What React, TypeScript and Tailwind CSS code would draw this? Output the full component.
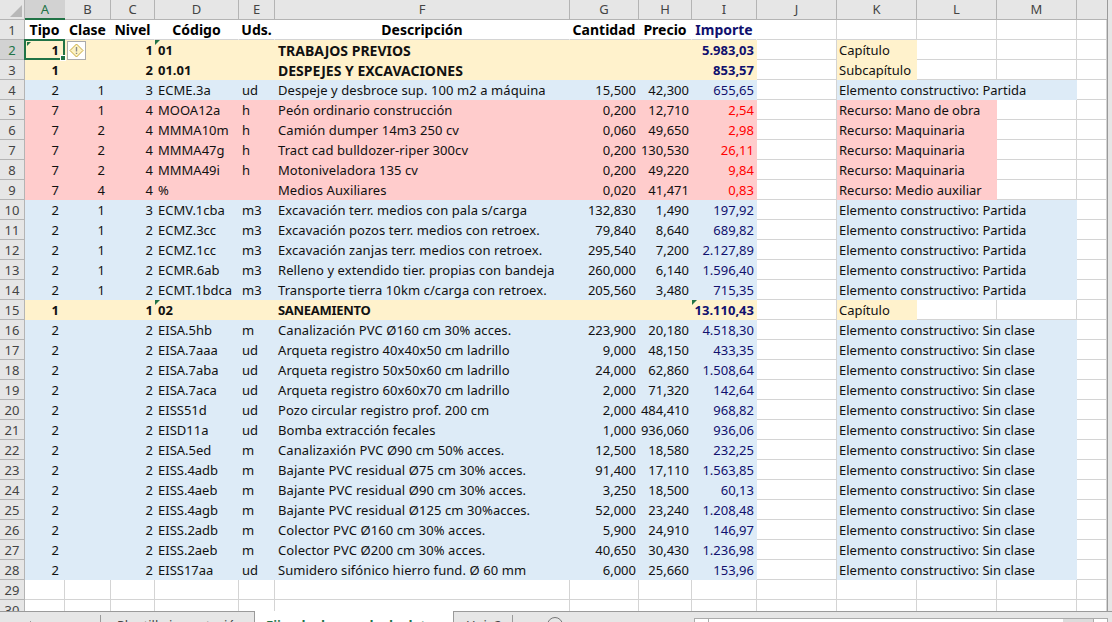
import React from 'react';

type RowKind = 'chapter' | 'item' | 'resource' | 'empty';

interface Row {
  kind: RowKind;
  tipo?: string;
  clase?: string;
  nivel?: string;
  codigo?: string;
  uds?: string;
  desc?: string;
  cant?: string;
  precio?: string;
  importe?: string;
  label?: string;
  flagCode?: boolean;
  flagImporte?: boolean;
  descClass?: string;
}

const SC = 'Elemento constructivo: Sin clase';
const EP = 'Elemento constructivo: Partida';

const rows: Row[] = [
  { kind: 'chapter', tipo: '1', nivel: '1', codigo: '01', desc: 'TRABAJOS PREVIOS', importe: '5.983,03', label: 'Capítulo', flagCode: true, descClass: 'text-[14px]' },
  { kind: 'chapter', tipo: '1', nivel: '2', codigo: '01.01', desc: 'DESPEJES Y EXCAVACIONES', importe: '853,57', label: 'Subcapítulo', descClass: 'text-[14px]' },
  { kind: 'item', tipo: '2', clase: '1', nivel: '3', codigo: 'ECME.3a', uds: 'ud', desc: 'Despeje y desbroce sup. 100 m2 a máquina', cant: '15,500', precio: '42,300', importe: '655,65', label: EP },
  { kind: 'resource', tipo: '7', clase: '1', nivel: '4', codigo: 'MOOA12a', uds: 'h', desc: 'Peón ordinario construcción', cant: '0,200', precio: '12,710', importe: '2,54', label: 'Recurso: Mano de obra' },
  { kind: 'resource', tipo: '7', clase: '2', nivel: '4', codigo: 'MMMA10m', uds: 'h', desc: 'Camión dumper 14m3 250 cv', cant: '0,060', precio: '49,650', importe: '2,98', label: 'Recurso: Maquinaria' },
  { kind: 'resource', tipo: '7', clase: '2', nivel: '4', codigo: 'MMMA47g', uds: 'h', desc: 'Tract cad bulldozer-riper 300cv', cant: '0,200', precio: '130,530', importe: '26,11', label: 'Recurso: Maquinaria' },
  { kind: 'resource', tipo: '7', clase: '2', nivel: '4', codigo: 'MMMA49i', uds: 'h', desc: 'Motoniveladora 135 cv', cant: '0,200', precio: '49,220', importe: '9,84', label: 'Recurso: Maquinaria' },
  { kind: 'resource', tipo: '7', clase: '4', nivel: '4', codigo: '%', desc: 'Medios Auxiliares', cant: '0,020', precio: '41,471', importe: '0,83', label: 'Recurso: Medio auxiliar' },
  { kind: 'item', tipo: '2', clase: '1', nivel: '3', codigo: 'ECMV.1cba', uds: 'm3', desc: 'Excavación terr. medios con pala s/carga', cant: '132,830', precio: '1,490', importe: '197,92', label: EP },
  { kind: 'item', tipo: '2', clase: '1', nivel: '2', codigo: 'ECMZ.3cc', uds: 'm3', desc: 'Excavación pozos terr. medios con retroex.', cant: '79,840', precio: '8,640', importe: '689,82', label: EP },
  { kind: 'item', tipo: '2', clase: '1', nivel: '2', codigo: 'ECMZ.1cc', uds: 'm3', desc: 'Excavación zanjas terr. medios con retroex.', cant: '295,540', precio: '7,200', importe: '2.127,89', label: EP },
  { kind: 'item', tipo: '2', clase: '1', nivel: '2', codigo: 'ECMR.6ab', uds: 'm3', desc: 'Relleno y extendido tier. propias con bandeja', cant: '260,000', precio: '6,140', importe: '1.596,40', label: EP },
  { kind: 'item', tipo: '2', clase: '1', nivel: '2', codigo: 'ECMT.1bdca', uds: 'm3', desc: 'Transporte tierra 10km c/carga con retroex.', cant: '205,560', precio: '3,480', importe: '715,35', label: EP },
  { kind: 'chapter', tipo: '1', nivel: '1', codigo: '02', desc: 'SANEAMIENTO', importe: '13.110,43', label: 'Capítulo', flagCode: true, flagImporte: true, descClass: 'tracking-[-0.3px]' },
  { kind: 'item', tipo: '2', nivel: '2', codigo: 'EISA.5hb', uds: 'm', desc: 'Canalización PVC Ø160 cm 30% acces.', cant: '223,900', precio: '20,180', importe: '4.518,30', label: SC },
  { kind: 'item', tipo: '2', nivel: '2', codigo: 'EISA.7aaa', uds: 'ud', desc: 'Arqueta registro 40x40x50 cm ladrillo', cant: '9,000', precio: '48,150', importe: '433,35', label: SC },
  { kind: 'item', tipo: '2', nivel: '2', codigo: 'EISA.7aba', uds: 'ud', desc: 'Arqueta registro 50x50x60 cm ladrillo', cant: '24,000', precio: '62,860', importe: '1.508,64', label: SC },
  { kind: 'item', tipo: '2', nivel: '2', codigo: 'EISA.7aca', uds: 'ud', desc: 'Arqueta registro 60x60x70 cm ladrillo', cant: '2,000', precio: '71,320', importe: '142,64', label: SC },
  { kind: 'item', tipo: '2', nivel: '2', codigo: 'EISS51d', uds: 'ud', desc: 'Pozo circular registro prof. 200 cm', cant: '2,000', precio: '484,410', importe: '968,82', label: SC },
  { kind: 'item', tipo: '2', nivel: '2', codigo: 'EISD11a', uds: 'ud', desc: 'Bomba extracción fecales', cant: '1,000', precio: '936,060', importe: '936,06', label: SC },
  { kind: 'item', tipo: '2', nivel: '2', codigo: 'EISA.5ed', uds: 'm', desc: 'Canalizaxión PVC Ø90 cm 50% acces.', cant: '12,500', precio: '18,580', importe: '232,25', label: SC },
  { kind: 'item', tipo: '2', nivel: '2', codigo: 'EISS.4adb', uds: 'm', desc: 'Bajante PVC residual Ø75 cm 30% acces.', cant: '91,400', precio: '17,110', importe: '1.563,85', label: SC },
  { kind: 'item', tipo: '2', nivel: '2', codigo: 'EISS.4aeb', uds: 'm', desc: 'Bajante PVC residual Ø90 cm 30% acces.', cant: '3,250', precio: '18,500', importe: '60,13', label: SC },
  { kind: 'item', tipo: '2', nivel: '2', codigo: 'EISS.4agb', uds: 'm', desc: 'Bajante PVC residual Ø125 cm 30%acces.', cant: '52,000', precio: '23,240', importe: '1.208,48', label: SC },
  { kind: 'item', tipo: '2', nivel: '2', codigo: 'EISS.2adb', uds: 'm', desc: 'Colector PVC Ø160 cm 30% acces.', cant: '5,900', precio: '24,910', importe: '146,97', label: SC },
  { kind: 'item', tipo: '2', nivel: '2', codigo: 'EISS.2aeb', uds: 'm', desc: 'Colector PVC Ø200 cm 30% acces.', cant: '40,650', precio: '30,430', importe: '1.236,98', label: SC },
  { kind: 'item', tipo: '2', nivel: '2', codigo: 'EISS17aa', uds: 'ud', desc: 'Sumidero sifónico hierro fund. Ø 60 mm', cant: '6,000', precio: '25,660', importe: '153,96', label: SC },
  { kind: 'empty' },
  { kind: 'empty' },
];

const gridCols = 'grid grid-cols-[25px_40px_46px_44px_84px_36px_295px_69px_53px_65px_80px_80px_80px_80px_30px]';
const blank = 'border-r border-b border-[#d4d4d4]';

const fills: Record<RowKind, string> = {
  chapter: 'bg-[#fff2cc]',
  item: 'bg-[#ddebf7]',
  resource: 'bg-[#ffcccc]',
  empty: blank,
};

const Flag: React.FC = () => (
  <span className="absolute left-0 top-0 w-0 h-0 border-t-[5px] border-r-[5px] border-t-[#217346] border-r-transparent" />
);

const Cell: React.FC<{ className?: string; children?: React.ReactNode }> = ({ className = '', children }) => (
  <div className={`relative h-5 leading-[21px] whitespace-nowrap ${className}`}>{children}</div>
);

const RowHeader: React.FC<{ n: number; active?: boolean }> = ({ n, active }) => (
  <div className={`h-5 leading-[21px] text-center text-[13px] border-r border-b border-[#b4b4b4] ${active ? 'bg-[#d2d2d2] text-[#217346]' : 'bg-[#e6e6e6] text-[#444444]'}`}>
    {n}
  </div>
);

const ColHeader: React.FC<{ label: string; active?: boolean }> = ({ label, active }) => (
  <div className={`h-5 leading-[19px] text-center text-[13px] ${active ? 'bg-[#d2d2d2] text-[#217346] border-b-2 border-[#217346]' : 'bg-[#e6e6e6] text-[#444444] border-b border-r border-[#b4b4b4]'}`}>
    {label}
  </div>
);

const SheetRow: React.FC<{ row: Row; n: number }> = ({ row, n }) => {
  const fill = fills[row.kind];
  const bold = row.kind === 'chapter' ? 'font-bold' : '';
  const importeColor = row.kind === 'resource' ? 'text-[#ff0000]' : 'text-[#10106e]';
  return (
    <>
      <RowHeader n={n} active={n === 2} />
      <Cell className={`${fill} ${bold} text-right pr-[6px]`}>{row.tipo}</Cell>
      <Cell className={`${fill} text-right pr-[6px]`}>{row.clase}</Cell>
      <Cell className={`${fill} ${bold} text-right pr-[2px]`}>{row.nivel}</Cell>
      <Cell className={`${fill} ${bold} pl-[3px]`}>
        {row.flagCode && <Flag />}
        {row.codigo}
      </Cell>
      <Cell className={`${fill} pl-[3px]`}>{row.uds}</Cell>
      <Cell className={`${fill} ${bold} pl-[3px] ${row.descClass ?? 'tracking-[0.08px]'}`}>{row.desc}</Cell>
      <Cell className={`${fill} text-right pr-[3px]`}>{row.cant}</Cell>
      <Cell className={`${fill} text-right pr-[3px]`}>{row.precio}</Cell>
      <Cell className={`${fill} ${bold} ${importeColor} text-right pr-[3px]`}>
        {row.flagImporte && <Flag />}
        {row.importe}
      </Cell>
      <Cell className={blank} />
      {/* the label spills over L and M, as a long text does in a sheet */}
      <Cell className={`${row.kind === 'empty' ? blank : fill} z-10 pl-[2px]`}>{row.label}</Cell>
      <Cell className={row.kind === 'item' || row.kind === 'resource' ? fill : blank} />
      <Cell className={row.kind === 'item' ? fill : blank} />
      <Cell className={blank} />
    </>
  );
};

const WarningTag: React.FC = () => (
  <div className="absolute z-20 left-[67px] top-[41px] w-[19px] h-[19px] bg-white border border-[#ababab] flex items-center justify-center">
    <svg width="15" height="15" viewBox="0 0 15 15">
      <path d="M7.5 1 L14 7.5 L7.5 14 L1 7.5 Z" fill="#fdf3c4" stroke="#c9a93a" strokeWidth="1" />
      <path d="M7.5 4 V8.6 M7.5 9.8 V11" stroke="#8a8a8a" strokeWidth="1.4" />
    </svg>
  </div>
);

const columns = ['A', 'B', 'C', 'D', 'E', 'F', 'G', 'H', 'I', 'J', 'K', 'L', 'M'];
const headings = ['Tipo', 'Clase', 'Nivel', 'Código', 'Uds.', 'Descripción', 'Cantidad', 'Precio', 'Importe'];

export default function App() {
  return (
    <div className="w-[1112px] h-[622px] overflow-hidden flex flex-col bg-[#e6e6e6] text-[13px] text-[#111111] font-['Noto_Sans',sans-serif]">
      <div className="flex h-[611px] shrink-0">
        <div className="relative w-[1107px] h-[611px] overflow-hidden bg-white border-r border-[#9a9a9a] box-content">
          <div className={gridCols}>
            <div className="relative h-5 bg-[#e6e6e6] border-r border-b border-[#b4b4b4]">
              <span className="absolute right-[2px] bottom-[2px] w-0 h-0 border-b-[12px] border-l-[12px] border-b-[#b8b8b8] border-l-transparent" />
            </div>
            {columns.map((c, i) => (
              <ColHeader key={c} label={c} active={i === 0} />
            ))}
            <div className="h-5 bg-[#e6e6e6] border-b border-[#b4b4b4]" />

            <RowHeader n={1} />
            {headings.map((h, i) => (
              <Cell key={h} className={`${blank} border-r-transparent text-center font-bold text-[14px] leading-[19px]! ${i === 8 ? 'text-[#10106e]' : 'text-black'}`}>
                {h}
              </Cell>
            ))}
            <Cell className={blank} />
            <Cell className={blank} />
            <Cell className={blank} />
            <Cell className={blank} />
            <Cell className={blank} />

            {rows.map((row, i) => (
              <SheetRow key={i} row={row} n={i + 2} />
            ))}
          </div>

          {/* selected cell A2 */}
          <div className="absolute z-20 left-[24px] top-[39px] w-[41px] h-[21px] border-2 border-[#217346] pointer-events-none">
            <span className="absolute left-[1px] top-[1px] w-0 h-0 border-t-[4px] border-r-[4px] border-t-[#217346] border-r-transparent" />
            <span className="absolute -right-[3px] -bottom-[3px] w-[6px] h-[6px] bg-[#217346] border border-white" />
          </div>
          <WarningTag />
        </div>
      </div>

      {/* sheet tabs and horizontal scrollbar */}
      <div className="flex h-[11px] overflow-hidden text-[13px] text-[#444444]">
        <div className="relative w-[100px] border-t border-[#9a9a9a] shrink-0">
          <span className="absolute left-[30px] top-[9px] w-px h-[3px] bg-[#9a9a9a]" />
        </div>
        <div className="w-[154px] shrink-0 border-t border-[#9a9a9a] pl-[17px] pt-[3px] leading-5 relative whitespace-nowrap">
          <span className="absolute left-0 top-[3px] w-px h-5 bg-[#9a9a9a]" />
          Plantilla importación
        </div>
        <div className="w-[200px] shrink-0 bg-white border-x border-[#9a9a9a] pl-[11px] pt-[4px] leading-5 font-bold text-[#217346] whitespace-nowrap">
          Fijando de mando de datos
        </div>
        <div className="w-[59px] shrink-0 border-t border-[#9a9a9a] pl-[12px] pt-[3px] leading-5 relative whitespace-nowrap">
          <span className="absolute right-0 top-[3px] w-px h-5 bg-[#9a9a9a]" />
          Hoja2
        </div>
        <div className="relative w-[181px] shrink-0 border-t border-[#9a9a9a]">
          <span className="absolute left-[34px] top-[5px] w-4 h-4 rounded-full border border-[#777777]" />
        </div>
        <div className="flex-1 border-t border-[#9a9a9a] pt-[6px] flex">
          <div className="w-[15px] h-5 bg-white border border-[#ababab]" />
          <div className="w-[354px] h-5 bg-white border-y border-[#ababab]" />
          <div className="w-[30px] h-5 bg-[#dcdcdc] border-y border-[#ababab]" />
          <div className="w-[15px] h-5 bg-white border border-[#ababab]" />
        </div>
      </div>
    </div>
  );
}
